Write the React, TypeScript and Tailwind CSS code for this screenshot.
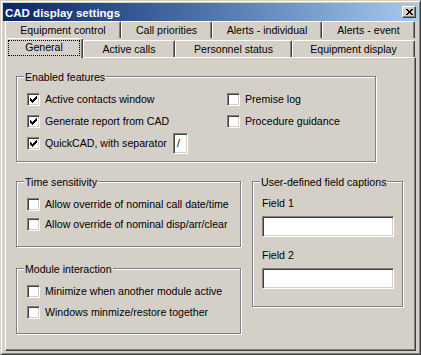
import React from 'react';

const font = { fontFamily: '"Liberation Sans", Arial, sans-serif' };

// classic 7x7 check glyph, one string per pixel row
const CHECK = ['......X', '.....XX', 'X...XXX', 'XX.XXX.', 'XXXXX..', '.XXX...', '..X....'];

const CheckMark = () => (
  <svg width="7" height="7" viewBox="0 0 7 7" shapeRendering="crispEdges">
    {CHECK.map((row, y) =>
      row.split('').map((c, x) => (c === 'X' ? <rect key={`${x}-${y}`} x={x} y={y} width="1" height="1" fill="#000" /> : null))
    )}
  </svg>
);

const Checkbox = ({ label, checked = false }: { label: string; checked?: boolean }) => (
  <div className="flex items-center h-[13px]">
    <span className="flex items-center justify-center w-[13px] h-[13px] shrink-0 bg-white border border-t-[#808080] border-l-[#808080] border-r-white border-b-white shadow-[inset_1px_1px_0_#404040,inset_-1px_-1px_0_#d4d0c8]">
      {checked && <CheckMark />}
    </span>
    <span className="ml-[5px] whitespace-nowrap leading-[13px]">{label}</span>
  </div>
);

const TextBox = ({ className = '', value = '' }: { className?: string; value?: string }) => (
  <div
    className={`flex items-center pl-[3px] bg-white border border-t-[#808080] border-l-[#808080] border-r-white border-b-white shadow-[inset_1px_1px_0_#404040,inset_-1px_-1px_0_#d4d0c8] ${className}`}
  >
    {value}
  </div>
);

const GroupBox = ({ title, className = '', children }: { title: string; className?: string; children?: React.ReactNode }) => (
  <div className={`relative border border-[#808080] shadow-[1px_1px_0_#fff,inset_1px_1px_0_#fff] ${className}`}>
    <span className="absolute left-[7px] -top-[6px] px-px bg-[#d4d0c8] leading-[13px] whitespace-nowrap">{title}</span>
    {children}
  </div>
);

const Tab = ({ label, width, front = false }: { label: string; width: string; front?: boolean }) => (
  <div
    className={`${width} ${front ? 'h-[17px] pt-px' : 'h-[17px] pt-[2px]'} flex justify-center items-center border-l border-t border-l-white border-t-white border-r border-r-[#404040] shadow-[inset_-1px_0_0_#808080] rounded-t-[2px] bg-[#d4d0c8] whitespace-nowrap`}
  >
    {label}
  </div>
);

export default function App() {
  return (
    <div
      style={font}
      className="w-[421px] h-[355px] bg-[#d4d0c8] text-[10.6px] text-black border border-t-[#d4d0c8] border-l-[#d4d0c8] border-r-[#404040] border-b-[#404040] shadow-[inset_1px_1px_0_#fff,inset_-1px_-1px_0_#808080] p-[2px] flex flex-col select-none"
    >
      {/* Title bar */}
      <div className="h-[18px] flex items-center justify-between pl-[2px] pr-[2px] bg-gradient-to-r from-[#0a246a] to-[#a6caf0]">
        <span className="text-white font-bold text-[11.5px] leading-[14px] pt-px">CAD display settings</span>
        <span className="w-[14px] h-[12px] flex items-center justify-center bg-[#d4d0c8] border border-t-white border-l-white border-r-[#404040] border-b-[#404040] shadow-[inset_-1px_-1px_0_#808080]">
          <svg width="7" height="6" viewBox="0 0 7 6" shapeRendering="crispEdges">
            <path d="M0 0h2v1H0zM5 0h2v1H5zM1 1h2v1H1zM4 1h2v1H4zM2 2h3v1H2zM2 3h3v1H2zM1 4h2v1H1zM4 4h2v1H4zM0 5h2v1H0zM5 5h2v1H5z" fill="#000" />
          </svg>
        </span>
      </div>

      {/* Tabs */}
      <div className="pl-[2px] flex flex-col">
        <div className="flex h-[17px]">
          <Tab label="Equipment control" width="w-[116px]" />
          <Tab label="Call priorities" width="w-[91px]" />
          <Tab label="Alerts - individual" width="w-[110px]" />
          <Tab label="Alerts - event" width="w-[93px]" />
        </div>
        <div className="flex items-end h-[19px]">
          <div className="relative z-10 w-[78px] h-[20px] -mb-px pt-px pl-[2px] pr-[2px] pb-[2px] flex border-l border-t border-l-white border-t-white border-r border-r-[#404040] shadow-[inset_-1px_0_0_#808080] rounded-t-[2px] bg-[#d4d0c8]">
            <span className="flex-1 flex items-center justify-center border border-dotted border-black">General</span>
          </div>
          <Tab label="Active calls" width="w-[92px]" front />
          <Tab label="Personnel status" width="w-[117px]" front />
          <Tab label="Equipment display" width="w-[123px]" front />
        </div>
      </div>

      {/* Page */}
      <div className="ml-[2px] w-[411px] h-[294px] border border-t-white border-l-white border-r-[#404040] border-b-[#404040] shadow-[inset_-1px_-1px_0_#808080] pl-[10px] pt-[18px]">
        <GroupBox title="Enabled features" className="w-[360px] h-[86px] pl-[10px] pt-[16px]">
          <div className="flex">
            <div className="w-[200px] flex flex-col gap-[9px]">
              <Checkbox label="Active contacts window" checked />
              <Checkbox label="Generate report from CAD" checked />
              <div className="flex items-center h-[13px]">
                <Checkbox label="QuickCAD, with separator" checked />
                <TextBox value="/" className="ml-[6px] w-[15px] h-[21px] shrink-0" />
              </div>
            </div>
            <div className="flex flex-col gap-[9px]">
              <Checkbox label="Premise log" />
              <Checkbox label="Procedure guidance" />
            </div>
          </div>
        </GroupBox>

        <div className="flex mt-[19px]">
          <div className="flex flex-col gap-[21px]">
            <GroupBox title="Time sensitivity" className="w-[225px] h-[66px] pl-[10px] pt-[16px]">
              <div className="flex flex-col gap-[7px]">
                <Checkbox label="Allow override of nominal call date/time" />
                <Checkbox label="Allow override of nominal disp/arr/clear" />
              </div>
            </GroupBox>
            <GroupBox title="Module interaction" className="w-[225px] h-[66px] pl-[10px] pt-[16px]">
              <div className="flex flex-col gap-[8px]">
                <Checkbox label="Minimize when another module active" />
                <Checkbox label="Windows minmize/restore together" />
              </div>
            </GroupBox>
          </div>

          <GroupBox title="User-defined field captions" className="ml-[11px] w-[151px] h-[126px] pl-[9px] pt-[15px]">
            <div className="leading-[13px]">Field 1</div>
            <TextBox className="mt-[6px] w-[132px] h-[21px]" />
            <div className="mt-[12px] leading-[13px]">Field 2</div>
            <TextBox className="mt-[6px] w-[132px] h-[21px]" />
          </GroupBox>
        </div>
      </div>
    </div>
  );
}
